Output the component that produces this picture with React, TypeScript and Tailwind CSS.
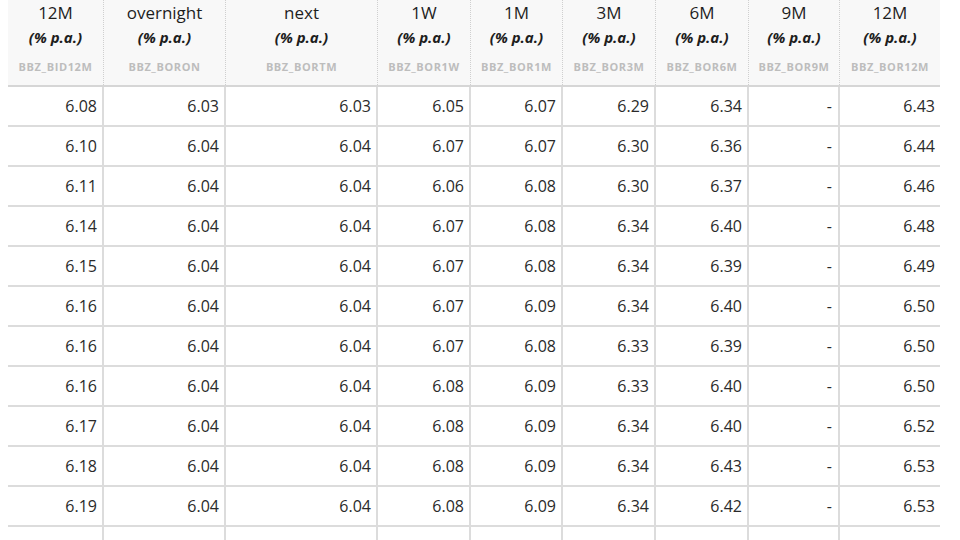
import React from "react";

const headers = [
  { t: "12M", c: "BBZ_BID12M" },
  { t: "overnight", c: "BBZ_BORON" },
  { t: "next", c: "BBZ_BORTM" },
  { t: "1W", c: "BBZ_BOR1W" },
  { t: "1M", c: "BBZ_BOR1M" },
  { t: "3M", c: "BBZ_BOR3M" },
  { t: "6M", c: "BBZ_BOR6M" },
  { t: "9M", c: "BBZ_BOR9M" },
  { t: "12M", c: "BBZ_BOR12M" },
];

const rows: string[][] = [
  ["6.08", "6.03", "6.03", "6.05", "6.07", "6.29", "6.34", "-", "6.43"],
  ["6.10", "6.04", "6.04", "6.07", "6.07", "6.30", "6.36", "-", "6.44"],
  ["6.11", "6.04", "6.04", "6.06", "6.08", "6.30", "6.37", "-", "6.46"],
  ["6.14", "6.04", "6.04", "6.07", "6.08", "6.34", "6.40", "-", "6.48"],
  ["6.15", "6.04", "6.04", "6.07", "6.08", "6.34", "6.39", "-", "6.49"],
  ["6.16", "6.04", "6.04", "6.07", "6.09", "6.34", "6.40", "-", "6.50"],
  ["6.16", "6.04", "6.04", "6.07", "6.08", "6.33", "6.39", "-", "6.50"],
  ["6.16", "6.04", "6.04", "6.08", "6.09", "6.33", "6.40", "-", "6.50"],
  ["6.17", "6.04", "6.04", "6.08", "6.09", "6.34", "6.40", "-", "6.52"],
  ["6.18", "6.04", "6.04", "6.08", "6.09", "6.34", "6.43", "-", "6.53"],
  ["6.19", "6.04", "6.04", "6.08", "6.09", "6.34", "6.42", "-", "6.53"],
  ["6.20", "6.04", "6.04", "6.08", "6.09", "6.34", "6.42", "-", "6.54"],
];

const grid =
  "grid grid-cols-[96px_122px_152px_93px_92px_93px_93px_91px_100px]";

export default function App() {
  return (
    <div
      className="w-[960px] h-[540px] overflow-hidden bg-white pl-2"
      style={{ fontFamily: '"Open Sans", "Liberation Sans", sans-serif' }}
    >
      <div className="w-[932px]">
        <div className={`${grid} bg-[#f8f8f8] border-b-2 border-[#d6d6d6]`}>
          {headers.map((h, i) => (
            <div
              key={i}
              className={`flex flex-col items-center h-[85px] ${
                i < 8 ? "border-r border-dotted border-[#cfcfcf]" : ""
              }`}
            >
              <div className="text-[17px] leading-[26px] text-[#1e1e1e]">
                {h.t}
              </div>
              <div className="text-[15px] leading-[22px] font-bold italic text-[#1e1e1e]">
                (% p.a.)
              </div>
              <div className="mt-[11px] text-[11px] leading-[16px] font-bold tracking-[0.6px] text-[#bdbdbd]">
                {h.c}
              </div>
            </div>
          ))}
        </div>
        {rows.map((r, ri) => (
          <div key={ri} className={`${grid} border-b-2 border-[#dcdcdc]`}>
            {r.map((v, ci) => (
              <div
                key={ci}
                className={`h-[38px] flex items-center justify-end pr-[5px] text-[16px] text-[#2a2a2a] ${
                  ci < 8 ? "border-r-2 border-[#dcdcdc]" : ""
                } ${ci === 7 ? "pr-[6px]" : ""}`}
              >
                {v}
              </div>
            ))}
          </div>
        ))}
      </div>
    </div>
  );
}
